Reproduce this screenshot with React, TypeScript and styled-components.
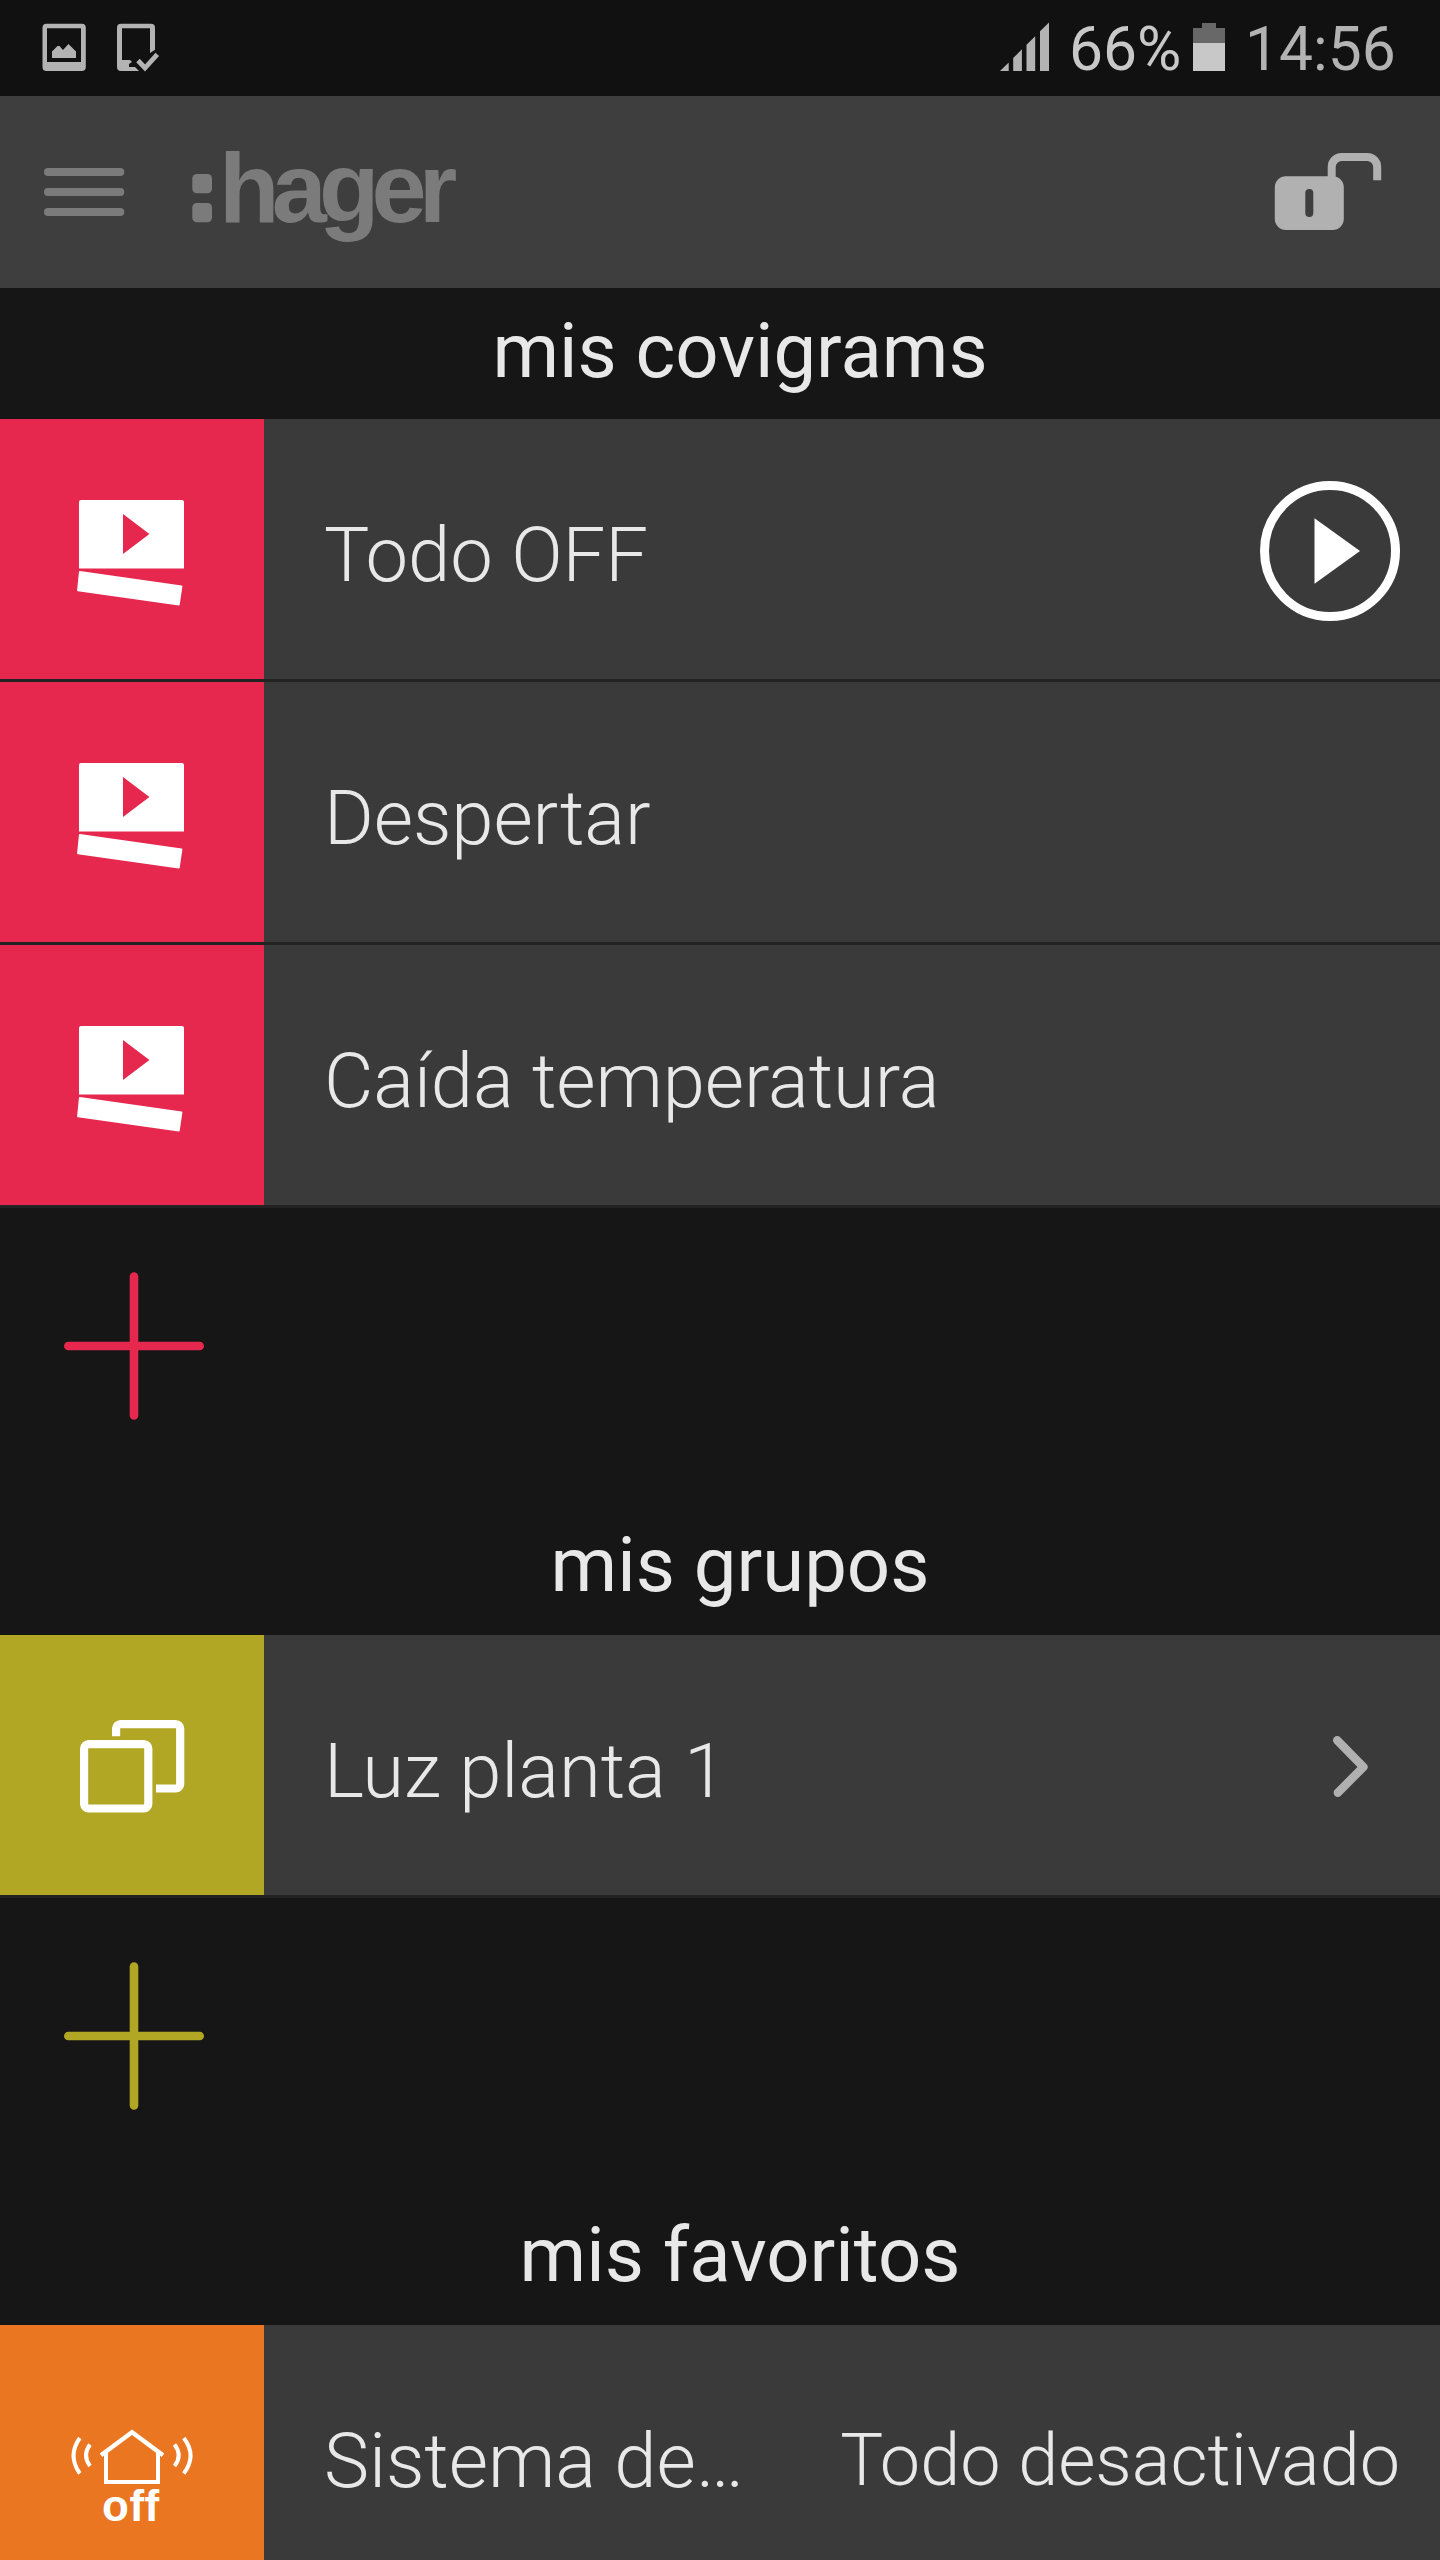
import React from 'react';
import styled, { createGlobalStyle } from 'styled-components';

const GlobalStyle = createGlobalStyle`
  * { box-sizing: border-box; }
  html, body { margin: 0; background: #161616; }
  body { font-family: Roboto, "Liberation Sans", sans-serif; }
  svg { display: block; flex: none; }
`;

const Screen = styled.div`
  width: 1440px;
  height: 2560px;
  overflow: hidden;
  background: #161616;
  color: #e8e8e8;
`;

const StatusBar = styled.div`
  height: 96px;
  display: flex;
  justify-content: space-between;
  background: #111111;
`;

const StatusGroup = styled.div`
  display: flex;
`;

const StatusText = styled.span<{ $color: string; $width: number }>`
  width: ${(p) => p.$width}px;
  font-size: 60.5px;
  line-height: 99px;
  white-space: nowrap;
  color: ${(p) => p.$color};
`;

const Header = styled.header`
  height: 192px;
  display: flex;
  justify-content: space-between;
  background: #3e3e3e;
`;

const Brand = styled.div`
  display: flex;
`;

const BrandName = styled.span`
  font-family: "Liberation Sans", Arial, sans-serif;
  font-weight: 700;
  font-size: 99px;
  line-height: 184px;
  letter-spacing: -7.800px;
  color: #7b7b7b;
`;

const Title = styled.h2<{ $first?: boolean }>`
  height: 131px;
  margin: 0;
  padding: 0 0 ${(p) => (p.$first ? 6 : 9)}px 40px;
  display: flex;
  align-items: center;
  justify-content: center;
  font-size: 76px;
  font-weight: 400;
`;

const Row = styled.div`
  height: 263px;
  display: flex;
  background: #3a3a3a;
  border-bottom: 3px solid #222222;
`;

const Tile = styled.div<{ $color: string }>`
  width: 264px;
  height: 260px;
  flex: none;
  background: ${(p) => p.$color};
`;

const Label = styled.span`
  flex: 1;
  padding: 12px 0 0 60px;
  font-size: 76px;
  font-weight: 300;
  line-height: 248px;
  letter-spacing: -0.100px;
  white-space: nowrap;
`;

const Value = styled.span`
  padding: 12px 40px 0 0;
  font-size: 72px;
  font-weight: 300;
  line-height: 248px;
  white-space: nowrap;
`;

const AddArea = styled.div`
  height: 296px;
`;

const PINK = '#e6274e';
const OLIVE = '#b2a625';
const ORANGE = '#ea7621';

const NotificationIcons = () => (
  <svg width="200" height="96" viewBox="0 0 200 96" fill="#b3b3b3">
    <path fillRule="evenodd" d="M46.500 23.700h35.300a4 4 0 0 1 4 4v39.300a4 4 0 0 1-4 4H46.500a4 4 0 0 1-4-4V27.700a4 4 0 0 1 4-4zM47 28.300V62h34V28.300z" />
    <path d="M52 58v-6.500l5.500-5.500h2l3.500 4 5.500-6 7.500 7.500V58z" />
    <path d="M121 23.700h30a4 4 0 0 1 4 4v22l-5 3.300V28.300h-28V60h8l2 2-3 2v3h6l4 4h-18a4 4 0 0 1-4-4V27.700a4 4 0 0 1 4-4z" />
    <path d="M138 60.500l7 7.500 12.300-13.700" fill="none" stroke="#b3b3b3" strokeWidth="4.800" />
  </svg>
);

const SignalIcon = () => (
  <svg width="69" height="96" viewBox="1000 0 69 96" fill="#b3b3b3">
    <path d="M1000 71l8.700-8.500V71zM1013.200 71V58l8.700-8.700V71zM1026.500 71V44.800l8.700-8.600V71zM1040 71V31.300l9-8.800V71z" />
  </svg>
);

const BatteryIcon = () => (
  <svg width="56" height="96" viewBox="1189 0 56 96">
    <path d="M1193 43V28h9v-5h14v5h9v15z" fill="#686868" />
    <path d="M1193 43h32v28h-32z" fill="#c8c8c8" />
  </svg>
);

const MenuIcon = () => (
  <svg width="219" height="192" viewBox="0 0 219 192" fill="#7b7b7b">
    <rect x="44" y="72" width="80.300" height="8" rx="4" />
    <rect x="44" y="92" width="80.300" height="8" rx="4" />
    <rect x="44" y="112" width="80.300" height="8" rx="4" />
    <rect x="192.300" y="78" width="19.700" height="19.300" rx="4.500" />
    <rect x="192.300" y="107" width="19.700" height="19.300" rx="4.500" />
  </svg>
);

const UnlockIcon = () => (
  <svg width="200" height="192" viewBox="1240 96 200 192">
    <path d="M1331.700 180v-13a10 10 0 0 1 10-10h25.500a10 10 0 0 1 10 10v13.300" fill="none" stroke="#b1b1b1" strokeWidth="8" />
    <rect x="1274.800" y="176.300" width="69" height="53.700" rx="11" fill="#b1b1b1" />
    <rect x="1305.300" y="189" width="8" height="28" rx="4" fill="#3e3e3e" />
  </svg>
);

const ClapIcon = () => (
  <svg width="264" height="260" viewBox="0 419 264 260" fill="#ffffff">
    <path fillRule="evenodd" d="M81 500h101a2 2 0 0 1 2 2v66.400H79V502a2 2 0 0 1 2-2zM123 514v40l26.400-20z" />
    <path d="M79.800 572l101.700 14.300-2.700 18.400L78 590.300z" stroke="#ffffff" strokeWidth="1.800" strokeLinejoin="round" />
  </svg>
);

const GroupIcon = () => (
  <svg width="264" height="260" viewBox="0 1635 264 260" fill="none" stroke="#ffffff" strokeWidth="8.200">
    <rect x="84.100" y="1744.100" width="64.200" height="64.400" rx="4.500" />
    <path d="M116.100 1736.200v-7.600a4.500 4.500 0 0 1 4.500-4.500h55.100a4.500 4.500 0 0 1 4.500 4.500v55.400a4.500 4.500 0 0 1-4.500 4.500H156" />
  </svg>
);

const AlarmTile = styled.div`
  height: 260px;
  display: grid;
  svg, span { grid-area: 1 / 1; }
`;

const AlarmState = styled.span`
  padding: 158px 0 0 102px;
  font: 700 44px/46px "Liberation Sans", Arial, sans-serif;
  letter-spacing: 0.500px;
  color: #ffffff;
`;

const AlarmIcon = () => (
  <AlarmTile>
    <svg width="264" height="260" viewBox="0 2325 264 260" fill="none" stroke="#ffffff" strokeWidth="4">
      <path d="M106 2453v29h52v-29" />
      <path d="M101 2455.200l31-23 31 23" strokeWidth="4.500" />
      <path d="M79.800 2438q-12.500 17.500 0 35.500M90 2444.500q-8 11 0 21.500M183.800 2438q13.500 17.500 0 35.500M174.500 2444.500q8.500 11 0 21.500" />
    </svg>
    <AlarmState>off</AlarmState>
  </AlarmTile>
);

const PlayIcon = () => (
  <svg width="220" height="260" viewBox="1220 419 220 260">
    <circle cx="1330" cy="551" r="65.500" fill="none" stroke="#ffffff" strokeWidth="9" />
    <path d="M1314.500 518.300v65.400L1360 551z" fill="#ffffff" />
  </svg>
);

const ChevronIcon = () => (
  <svg width="200" height="260" viewBox="1240 1635 200 260">
    <path d="M1337.200 1740.200l26.200 26.800-25.600 25.700" fill="none" stroke="#b0b0b0" strokeWidth="8.400" strokeLinecap="round" strokeLinejoin="round" />
  </svg>
);

const AddButton = ({ color }: { color: string }) => (
  <AddArea>
    <svg width="264" height="276" viewBox="0 1208 264 276" fill={color}>
      <rect x="64" y="1341.700" width="140" height="8.600" rx="4.300" />
      <rect x="129.700" y="1272.300" width="8.600" height="147.500" rx="4.300" />
    </svg>
  </AddArea>
);

const covigrams = [
  { name: 'Todo OFF', playable: true },
  { name: 'Despertar', playable: false },
  { name: 'Caída temperatura', playable: false },
];

export default function App() {
  return (
    <Screen>
      <GlobalStyle />
      <StatusBar>
        <NotificationIcons />
        <StatusGroup>
          <SignalIcon />
          <StatusText $color="#c8c8c8" $width={120}>66%</StatusText>
          <BatteryIcon />
          <StatusText $color="#b3b3b3" $width={195}>14:56</StatusText>
        </StatusGroup>
      </StatusBar>
      <Header>
        <Brand>
          <MenuIcon />
          <BrandName>hager</BrandName>
        </Brand>
        <UnlockIcon />
      </Header>
      <Title $first>mis covigrams</Title>
      {covigrams.map((item) => (
        <Row key={item.name}>
          <Tile $color={PINK}><ClapIcon /></Tile>
          <Label>{item.name}</Label>
          {item.playable && <PlayIcon />}
        </Row>
      ))}
      <AddButton color={PINK} />
      <Title>mis grupos</Title>
      <Row>
        <Tile $color={OLIVE}><GroupIcon /></Tile>
        <Label>Luz planta 1</Label>
        <ChevronIcon />
      </Row>
      <AddButton color={OLIVE} />
      <Title>mis favoritos</Title>
      <Row>
        <Tile $color={ORANGE}><AlarmIcon /></Tile>
        <Label>Sistema de…</Label>
        <Value>Todo desactivado</Value>
      </Row>
    </Screen>
  );
}
